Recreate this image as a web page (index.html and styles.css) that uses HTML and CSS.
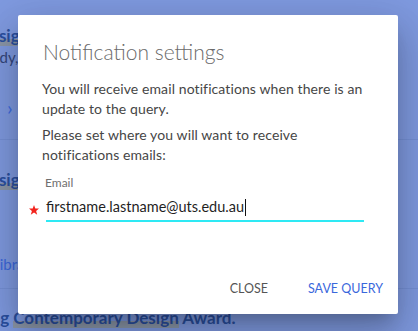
FILE: index.html
```html
<!DOCTYPE html>
<html lang="en">
  <head>
    <meta charset="UTF-8" />
    <meta name="viewport" content="width=device-width, initial-scale=1.0" />
    <title>Notification settings</title>

    <link rel="stylesheet" href="styles.css">
  </head>

  <body>
    <main class="page">
      <article class="result">
        <h3 class="result-title title-one"><mark>Design</mark> Futures</h3>
        <p class="result-meta">Study, Australia</p>
        <a class="result-more" href="#">›</a>
      </article>
      <article class="result">
        <h3 class="result-title title-two"><mark>Design</mark> Practice</h3>
        <a class="result-link" href="#">Library</a>
      </article>
      <article class="result">
        <h3 class="result-title title-three">Winning <mark>Contemporary Design</mark> Award.</h3>
      </article>
    </main>

    <section class="dialog" role="dialog">
      <h2 class="dialog-title">Notification settings</h2>
      <div class="dialog-body">
        <p>You will receive email notifications when there is an update to the query.</p>
        <p>Please set where you will want to receive notifications emails:</p>

        <div class="field">
          <label class="field-label">Email</label>
          <div class="field-row">
            <svg class="required" viewBox="0 0 10 10" width="10" height="10">
              <polygon points="5,0 6.3,3.5 10,3.6 7.1,5.9 8.2,9.7 5,7.5 1.8,9.7 2.9,5.9 0,3.6 3.7,3.5" fill="#f2231d"></polygon>
            </svg>
            <div class="field-input">firstname.lastname@uts.edu.au<span class="caret"></span></div>
          </div>
        </div>
      </div>

      <footer class="dialog-actions">
        <button class="btn btn-close">Close</button>
        <button class="btn btn-save">Save query</button>
      </footer>
    </section>
  </body>
</html>
```

FILE: styles.css
```css
*,
*::before,
*::after {
  box-sizing: border-box;
}

body {
  font-family: Lato, 'Open Sans', sans-serif;
  background: #7f9ae0;
  margin: 0;
  height: 331px;
  overflow: hidden;
}

.page {
  display: flex;
  flex-direction: column;
}

.result {
  border-bottom: 1px solid #7590d6;
  display: flex;
  flex-direction: column;

  &:last-child {
    border-bottom: 0;
  }
}

.result-title {
  color: #2a4f9f;
  font-size: 17px;
  font-weight: 700;
  line-height: 20px;
  margin: 0;
  white-space: nowrap;

  mark {
    color: inherit;
    background: linear-gradient(transparent 68%, #8b96a8 68%);
  }
}

.title-one {
  margin: 26px 0 0 -23px;
}

.title-two {
  margin: 30px 0 0 -23px;
}

.title-three {
  margin: 19px 0 0 -55px;
}

.result-meta {
  color: #34477c;
  font-size: 15px;
  margin: 2px 0 0 -22px;
  white-space: nowrap;
}

.result-more {
  color: #3d6be0;
  font-size: 20px;
  margin: 29px 0 20px 7px;
  text-decoration: none;
}

.result-link {
  color: #3c68dc;
  font-size: 15px;
  margin: 65px 0 15px -8px;
  text-decoration: none;
}

.dialog {
  position: absolute;
  top: 15px;
  left: 18px;
  width: 380px;
  height: 299px;
  background: #fff;
  border-radius: 2px;
  box-shadow: 0 11px 15px -7px rgba(0, 0, 0, 0.2),
    0 24px 38px 3px rgba(0, 0, 0, 0.14), 0 9px 46px 8px rgba(0, 0, 0, 0.12);
  padding: 23px 28px 8px 24px;
  display: flex;
  flex-direction: column;
}

.dialog-title {
  color: #6a6a6a;
  font-size: 21px;
  font-weight: 300;
  line-height: 28px;
  margin: 0 0 0 1px;
}

.dialog-body {
  margin-top: 13px;
  color: #464646;
  font-size: 14px;
  letter-spacing: 0.1px;
  line-height: 20px;

  p {
    margin: 0 0 6px;
  }
}

.field {
  margin-top: 10px;
  display: flex;
  flex-direction: column;
}

.field-label {
  color: #6f6f6f;
  font-size: 12px;
  line-height: 16px;
  letter-spacing: 0;
  margin-left: 3px;
}

.field-row {
  display: flex;
  align-items: center;
  margin: 6px 6px 0 -13px;
  gap: 7px;
}

.required {
  flex: none;
  margin-top: 1px;
}

.field-input {
  flex: 1;
  color: #1f1f1f;
  font-size: 14.5px;
  letter-spacing: 0;
  line-height: 20px;
  padding-bottom: 3px;
  border-bottom: 2px solid #2ee9f4;
  display: flex;
  align-items: center;
}

.caret {
  display: inline-block;
  width: 1px;
  height: 17px;
  background: #111;
  margin-left: 1px;
}

.dialog-actions {
  margin: auto -21px 0 0;
  display: flex;
  justify-content: flex-end;
  gap: 24px;
}

.btn {
  background: none;
  border: 0;
  font-family: inherit;
  font-size: 12.5px;
  text-transform: uppercase;
  height: 36px;
  padding: 0 8px;
  cursor: pointer;
}

.btn-close {
  color: #555;
}

.btn-save {
  color: #3a68dc;
}
```
